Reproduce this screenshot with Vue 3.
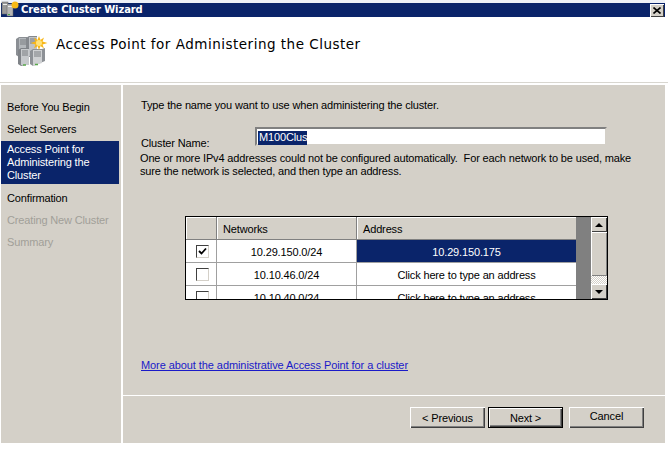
<script setup>
const steps = [
  { label: 'Before You Begin', state: 'normal' },
  { label: 'Select Servers', state: 'normal' },
  { label: 'Access Point for Administering the Cluster', state: 'active' },
  { label: 'Confirmation', state: 'normal' },
  { label: 'Creating New Cluster', state: 'disabled' },
  { label: 'Summary', state: 'disabled' }
]
const rows = [
  { net: '10.29.150.0/24', addr: '10.29.150.175', checked: true, sel: true },
  { net: '10.10.46.0/24', addr: 'Click here to type an address' },
  { net: '10.10.40.0/24', addr: 'Click here to type an address' }
]
</script>

<template>
  <div class="win">
    <div class="titlebar">
      <svg class="tico" width="20" height="17" viewBox="0 0 20 17">
        <rect x="1" y="2" width="6" height="12" fill="#9a9a9a" stroke="#666" stroke-width=".5"/>
        <rect x="6" y="4" width="6" height="12" fill="#b5b5b5" stroke="#666" stroke-width=".5"/>
        <rect x="2" y="4" width="4" height="1" fill="#eee"/>
        <rect x="7" y="6" width="4" height="1" fill="#eee"/>
        <rect x="7" y="14" width="2" height="1" fill="#4a4"/>
        <circle cx="14" cy="5" r="3.5" fill="#f7b917"/>
      </svg>
      <span class="ttext">Create Cluster Wizard</span>
      <span class="close"><svg width="8" height="7" viewBox="0 0 8 7"><path d="M0.5 0.5L7.5 6.5M7.5 0.5L0.5 6.5" stroke="#000" stroke-width="1.6"/></svg></span>
    </div>
    <div class="header">
      <svg class="hico" width="33" height="32" viewBox="0 0 33 32">
        <path d="M1 4L4 2H12V20L4 22L1 20Z" fill="#8b8f94"/>
        <path d="M4 3H12V21H4Z" fill="#b4b8bc"/>
        <path d="M11 3L14 1H22V20L14 22L11 20Z" fill="#85898e"/>
        <path d="M14 2H22V21H14Z" fill="#bfc2c6"/>
        <path d="M3 15L6 13H14V29L6 31L3 29Z" fill="#7f8388"/>
        <path d="M6 14H14V30H6Z" fill="#c6c9cc"/>
        <path d="M15 16L18 14H27L30 13V26L18 31L15 29Z" fill="#8d9196"/>
        <path d="M18 15H27V28L18 31Z" fill="#cfd1d3"/>
        <path d="M5 5H11M5 7H11M5 9H11M15 4H21M15 6H21M15 8H21M7 16H13M7 18H13M7 20H13M19 17H26M19 19H26M19 21H26" stroke="#7a7e82" stroke-width="1"/>
        <path d="M8 30h3M20 29.5h3" stroke="#58a84a" stroke-width="1.5"/>
        <path d="M24 1L25.5 5L29 2.5L27.5 6.5L32.5 8L27.5 9.5L29 13.5L25.5 11L24 15L22.5 11L19 13.5L20.5 9.5L15.5 8L20.5 6.5L19 2.5L22.5 5Z" fill="#f8b616"/>
        <circle cx="24" cy="8" r="3" fill="#ffe27a"/>
      </svg>
      <span class="htitle">Access Point for Administering the Cluster</span>
    </div>
    <div class="body">
      <nav class="nav">
        <div v-for="s in steps" :key="s.label" class="step" :class="s.state">{{ s.label }}</div>
      </nav>
      <main class="main">
        <div class="content">
          <p class="intro">Type the name you want to use when administering the cluster.</p>
          <div class="namerow">
            <label class="namelabel">Cluster Name:</label>
            <div class="input"><span class="seltext">M100Clus</span></div>
          </div>
          <p class="desc">One or more IPv4 addresses could not be configured automatically.&nbsp; For each network to be used, make<br>sure the network is selected, and then type an address.</p>
          <div class="grid">
            <div class="table">
              <div class="hrow">
                <div class="hc c1"></div>
                <div class="hc c2">Networks</div>
                <div class="hc c3">Address</div>
              </div>
              <div v-for="r in rows" :key="r.net" class="row">
                <div class="cell c1">
                  <span class="check"><svg v-if="r.checked" width="9" height="9" viewBox="0 0 9 9"><path d="M1 4L3.5 6.5L8 1.5" fill="none" stroke="#000" stroke-width="1.8"/></svg></span>
                </div>
                <div class="cell c2">{{ r.net }}</div>
                <div class="cell c3" :class="{ sel: r.sel }">{{ r.addr }}</div>
              </div>
            </div>
            <div class="gutter"></div>
            <div class="sb">
              <div class="sbtn"><i class="up"></i></div>
              <div class="thumb"></div>
              <div class="track"></div>
              <div class="sbtn"><i class="down"></i></div>
            </div>
          </div>
          <a class="link">More about the administrative Access Point for a cluster</a>
        </div>
        <div class="footer">
          <button class="btn">&lt; Previous</button>
          <button class="btn def">Next &gt;</button>
          <button class="btn cancel">Cancel</button>
        </div>
      </main>
    </div>
  </div>
</template>

<style scoped>
.win {
  width: 668px;
  height: 471px;
  background: #fff;
  overflow: hidden;
  font-family: "Liberation Sans", Arial, sans-serif;
  font-size: 11px;
  letter-spacing: -0.15px;
  color: #000;
  padding-top: 3px;
  box-sizing: border-box;
}
.titlebar {
  width: 664px;
  margin-left: 1px;
  height: 14px;
  background: #0a246a;
  display: flex;
  align-items: center;
  position: relative;
  box-shadow: 0 -3px 0 #eef1f7;
}
.tico { position: absolute; left: 0; top: -3px; }
.ttext {
  margin-left: 20px;
  margin-top: -2px;
  color: #fff;
  font-family: "DejaVu Sans", sans-serif;
  font-weight: bold;
  font-size: 10px;
  letter-spacing: -0.1px;
}
.close {
  margin-left: auto;
  margin-right: 1px;
  width: 14px;
  height: 13px;
  background: #d4d0c8;
  box-shadow: inset 1px 1px #fff, inset -1px -1px #404040;
  display: flex;
  align-items: center;
  justify-content: center;
}
.header {
  height: 65px;
  display: flex;
  align-items: flex-start;
  border-bottom: 1px solid #d8d6d0;
  margin-bottom: 2px;
}
.hico { margin: 18px 0 0 15px; }
.htitle {
  margin: 19px 0 0 8px;
  font-family: "DejaVu Sans", sans-serif;
  font-size: 13.5px;
  font-weight: 500;
  letter-spacing: 0.5px;
}
.body {
  display: flex;
  height: 358px;
  width: 664px;
  margin-left: 1px;
}
.nav {
  width: 120px;
  background: #d4d0c8;
  padding-top: 14px;
  box-sizing: border-box;
  margin-right: 2px;
  flex: none;
}
.step {
  width: 118px;
  padding-left: 6px;
  height: 22px;
  line-height: 16px;
  box-sizing: border-box;
}
.step.active {
  height: 43px;
  line-height: 13px;
  background: #0a246a;
  color: #fff;
  padding: 2px 20px 0 6px;
  margin-bottom: 6px;
  margin-top: -2px;
}
.step.disabled { color: #a19f98; }
.main {
  flex: 1;
  background: #d4d0c8;
  display: flex;
  flex-direction: column;
}
.content {
  height: 311px;
  box-sizing: border-box;
  padding: 12px 0 0 18px;
  border-bottom: 1px solid #fff;
}
.intro { margin: 0; line-height: 16px; }
.namerow { display: flex; margin-top: 14px; height: 19px; }
.namelabel { width: 114px; padding-top: 9px; flex: none; line-height: 14px; }
.input {
  width: 352px;
  height: 19px;
  box-sizing: border-box;
  background: #fff;
  border: 2px solid;
  border-color: #808080 #d4d0c8 #d4d0c8 #808080;
  padding: 2px 0 0 1px;
  line-height: 13px;
}
.seltext { background: #0a246a; color: #fff; display: inline-block; height: 14px; padding: 0 0 0 1px; }
.desc { margin: 6px 0 0 -1px; line-height: 13px; white-space: nowrap; }
.grid {
  margin: 38px 0 0 44px;
  width: 423px;
  height: 84px;
  box-sizing: border-box;
  border: 1px solid #000;
  display: flex;
  overflow: hidden;
}
.table { width: 390px; flex: none; }
.hrow { display: flex; height: 22px; background: #d4d0c8; border-bottom: 1px solid #808080; }
.hc {
  box-sizing: border-box;
  padding-left: 6px;
  line-height: 24px;
  box-shadow: inset 1px 1px #fff;
  border-right: 1px solid #808080;
}
.c1 { width: 31px; flex: none; }
.c2 { width: 140px; flex: none; }
.c3 { width: 219px; flex: none; border-right: 0 !important; }
.row { display: flex; height: 23px; }
.cell {
  background: #fff;
  box-sizing: border-box;
  border-right: 1px solid #a0a0a0;
  border-bottom: 1px solid #a0a0a0;
  text-align: center;
  line-height: 23px;
  display: flex;
  align-items: center;
  justify-content: center;
  padding-top: 2px;
}
.cell.c1 { justify-content: flex-start; padding: 0 0 0 10px; }
.cell.sel { background: #0a246a; color: #fff; }
.check {
  width: 11px;
  height: 11px;
  background: #fff;
  border: 1px solid;
  border-color: #404040 #d4d0c8 #d4d0c8 #404040;
  display: flex;
  align-items: center;
  justify-content: center;
}
.gutter { width: 15px; background: #808080; flex: none; }
.sb { width: 16px; flex: none; display: flex; flex-direction: column; background: #d4d0c8; }
.sbtn {
  height: 15px;
  flex: none;
  background: #d4d0c8;
  box-shadow: inset 1px 1px #fff, inset -1px -1px #404040;
  display: flex;
  align-items: center;
  justify-content: center;
}
.up { border-left: 4px solid transparent; border-right: 4px solid transparent; border-bottom: 4px solid #000; }
.down { border-left: 4px solid transparent; border-right: 4px solid transparent; border-top: 4px solid #000; }
.thumb { height: 44px; background: #d4d0c8; box-shadow: inset 1px 1px #fff, inset -1px -1px #808080; }
.track { flex: 1; background: repeating-conic-gradient(#fff 0 25%, #d4d0c8 0 50%) 0 0 / 2px 2px; }
.link {
  display: block;
  margin-top: 58px;
  color: #1a1ac8;
  text-decoration: underline;
  line-height: 14px;
  letter-spacing: -0.08px;
}
.footer {
  display: flex;
  padding: 11px 0 0 287px;
}
.btn {
  width: 75px;
  height: 21px;
  padding: 1px 0 0;
  font: inherit;
  letter-spacing: inherit;
  background: #d4d0c8;
  border: 0;
  box-shadow: inset 1px 1px #fff, inset -1px -1px #404040, inset -2px -2px #808080;
  color: #000;
  margin-right: 3px;
}
.btn.def { box-shadow: inset 0 0 0 1px #000, inset 2px 2px #fff, inset -2px -2px #404040, inset -3px -3px #808080; }
.cancel { margin-left: 3px; padding: 0 0 3px; }
</style>

<style>
html, body { margin: 0; background: #fff; }
</style>
